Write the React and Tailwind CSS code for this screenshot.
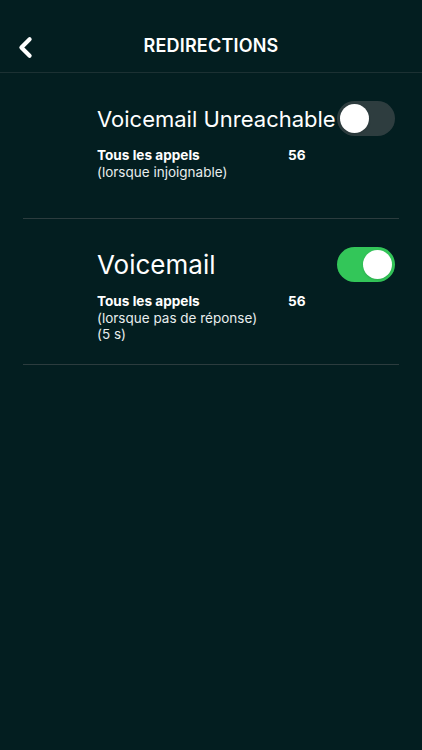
import { ChevronLeft } from 'lucide-react';

function Toggle({ on }) {
    return (
        <div
            className={`relative z-10 w-[58px] h-[35px] rounded-full p-[3px] flex items-center shrink-0 ${
                on ? 'bg-[#33c659] justify-end' : 'bg-[#2e3d3f] justify-start'
            }`}
        >
            <div className="w-[29px] h-[29px] rounded-full bg-white shadow" />
        </div>
    );
}

function RedirectRow({ title, small, lines, value, on }) {
    return (
        <div className="mx-[23px] h-[146px] border-b border-[#2c3c3e] pl-[74px] pr-[4px] pt-[28px]">
            <div className="flex items-center h-[35px]">
                <span
                    className={`flex-1 min-w-0 whitespace-nowrap text-white leading-none ${
                        small ? 'text-[22px]' : 'text-[26px]'
                    }`}
                >
                    {title}
                </span>
                <Toggle on={on} />
            </div>
            <div className="mt-[11px] flex leading-[16.5px] text-white">
                <div className="w-[191px]">
                    <div className="font-bold text-[13.6px]">Tous les appels</div>
                    {lines.map((l) => (
                        <div key={l} className="text-[13.5px] text-[#e8eded]">{l}</div>
                    ))}
                </div>
                <div className="font-bold text-[13.6px]">{value}</div>
            </div>
        </div>
    );
}

export default function App() {
    return (
        <div className="w-[422px] h-[750px] bg-[#031e20] font-['Inter',sans-serif] overflow-hidden">
            <header className="relative h-[73px] border-b border-[#1c3133] flex justify-center pt-[35px]">
                <ChevronLeft className="absolute left-[9px] top-[31px] text-white" size={33} strokeWidth={3} />
                <h1 className="text-white text-[18px] leading-[22px] font-semibold tracking-[0.2px]">REDIRECTIONS</h1>
            </header>

            <RedirectRow
                title="Voicemail Unreachable"
                small
                lines={['(lorsque injoignable)']}
                value="56"
                on={false}
            />
            <RedirectRow
                title="Voicemail"
                lines={['(lorsque pas de réponse)', '(5 s)']}
                value="56"
                on={true}
            />
        </div>
    );
}
